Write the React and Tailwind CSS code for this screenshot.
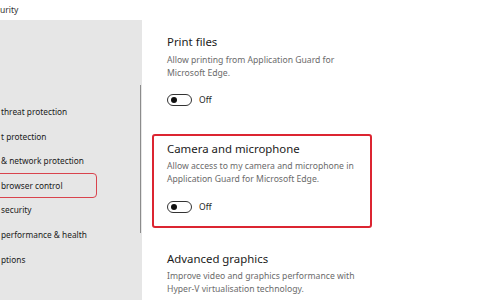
import React from 'react';

const navItems = [
    { label: 'threat protection' },
    { label: 't protection' },
    { label: '& network protection' },
    { label: 'browser control', active: true },
    { label: 'security' },
    { label: 'performance & health' },
    { label: 'ptions' },
];

const Toggle = () => (
    <div className="flex items-center gap-[7px]">
        <div className="w-[25px] h-[12px] rounded-full border border-[#333] flex items-center pl-[3px]">
            <div className="w-[6px] h-[6px] rounded-full bg-[#111]" />
        </div>
        <span className="text-[8.5px] text-[#222]">Off</span>
    </div>
);

const Setting = ({ title, lines, toggle = true }) => (
    <div>
        <div className="text-[11.4px] leading-[16px] text-[#1b1b1b]">{title}</div>
        <div className="mt-[3.5px] text-[8.65px] leading-[13px] text-[#6b6b6b]">
            {lines.map(l => <div key={l} className="whitespace-nowrap">{l}</div>)}
        </div>
        {toggle && <div className="mt-[14.5px]"><Toggle /></div>}
    </div>
);

export default function App() {
    return (
        <div className="w-[480px] h-[300px] flex overflow-hidden bg-white" style={{ fontFamily: "'Noto Sans', sans-serif" }}>
            {/* Left nav column */}
            <div className="w-[142px] shrink-0 flex flex-col">
                <div className="h-[20px] flex items-center text-[8.5px] text-[#333] pt-[1px]">urity</div>
                <div className="flex-1 relative bg-[#e6e6e6] pt-[80px]">
                    {navItems.map(item => (
                        <div key={item.label} className="h-[24.6px] flex items-center relative">
                            <span className="text-[8.3px] text-[#1b1b1b] whitespace-nowrap ml-[1px]">{item.label}</span>
                            {item.active && (
                                <div className="absolute left-[-6px] top-[-1px] w-[103px] h-[25px] rounded-[4px] border-[1.5px] border-[#d9434d]" />
                            )}
                        </div>
                    ))}
                    {/* scrollbar */}
                    <div className="absolute left-[140px] top-[65px] w-[1px] h-[148px] bg-[#8c8c8c]" />
                </div>
            </div>

            {/* Main settings */}
            <div className="flex-1 pt-[34px]">
                <div className="pl-[25px]">
                    <Setting title="Print files" lines={['Allow printing from Application Guard for', 'Microsoft Edge.']} />
                </div>
                <div className="ml-[10px] mt-[27px] w-[220px] h-[94px] rounded-[3px] border-2 border-[#dc2531] pl-[13px] pt-[5px]">
                    <Setting title="Camera and microphone" lines={['Allow access to my camera and microphone in', 'Application Guard for Microsoft Edge.']} />
                </div>
                <div className="pl-[25px] mt-[23px]">
                    <Setting title="Advanced graphics" lines={['Improve video and graphics performance with', 'Hyper-V virtualisation technology.']} toggle={false} />
                </div>
            </div>
        </div>
    );
}
